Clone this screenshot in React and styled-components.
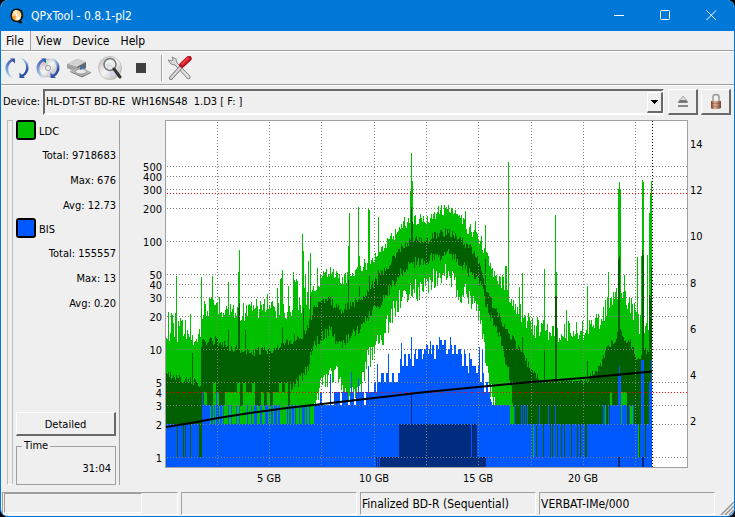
import React from 'react';
import styled, { createGlobalStyle } from 'styled-components';

const Global = createGlobalStyle`
  * { box-sizing: border-box; }
  body { margin: 0; background: #000; }
  button, select { font: inherit; color: inherit; }
`;

const small = '"DejaVu Sans Condensed", "DejaVu Sans", sans-serif';

const Window = styled.div`
  min-height: 100vh;
  display: flex;
  flex-direction: column;
  background: #efefef;
  border: 1px solid #0078d7;
  border-top: 0;
  border-radius: 8px;
  overflow: hidden;
  color: #000;
  font: 11px/14px ${small};
`;

const TitleBar = styled.header`
  display: flex;
  align-items: center;
  height: 31px;
  flex: none;
  padding-left: 8px;
  background: #0078d7;
  color: #fff;
`;

const Title = styled.h1`
  flex: 1;
  margin: 0 0 0 6px;
  font: 400 12px/16px ${small};
`;

const CaptionButton = styled.button`
  display: grid;
  place-items: center;
  width: 46px;
  height: 31px;
  padding: 0;
  border: 0;
  background: none;
`;

const MenuBar = styled.nav`
  display: flex;
  height: 20px;
  flex: none;
  border-bottom: 1px solid #a0a0a0;
`;

const MenuItem = styled.button`
  height: 19px;
  padding: 0 5px;
  border: 0;
  border-right: 1px solid ${p => (p.$active ? '#a0a0a0' : 'transparent')};
  background: ${p => (p.$active ? '#f4f4f4' : 'none')};
  font: 12px/18px ${small};

  &:first-child { padding-right: 6px; }
`;

const ToolBar = styled.div`
  display: flex;
  align-items: center;
  gap: 3px;
  height: 34px;
  flex: none;
  padding-left: 2px;
  border-top: 1px solid #fff;
  border-bottom: 1px solid #a0a0a0;
`;

const ToolButton = styled.button`
  display: grid;
  place-items: center;
  width: 28px;
  height: 28px;
  padding: 0;
  border: 0;
  background: none;
`;

const ToolDivider = styled.span`
  width: 2px;
  height: 26px;
  margin: 0 0 0 3px;
  border-left: 1px solid #a0a0a0;
  border-right: 1px solid #fff;
`;

const DeviceRow = styled.div`
  display: flex;
  align-items: center;
  height: 35px;
  flex: none;
  padding: 0 3px 2px 2px;
  border-top: 1px solid #fff;
`;

const DeviceLabel = styled.label`
  width: 40px;
  flex: none;
  white-space: nowrap;
`;

const SelectBox = styled.div`
  position: relative;
  flex: 1;
  margin-right: 4px;
`;

const DeviceSelect = styled.select`
  display: block;
  width: 100%;
  height: 26px;
  padding: 0 20px 0 1px;
  appearance: none;
  border: 2px solid;
  border-color: #696969 #fff #fff #696969;
  border-radius: 0;
  background: #efefef;
  font: 11px/14px ${small};
`;

const SelectArrow = styled.span`
  position: absolute;
  top: 3px;
  right: 1px;
  display: grid;
  place-items: center;
  width: 16px;
  height: 21px;
  border: solid;
  border-width: 1px 2px 2px 1px;
  border-color: #fff #696969 #696969 #fff;
  pointer-events: none;
`;

const PushButton = styled.button`
  display: grid;
  place-items: center;
  width: ${p => (p.$wide ? '100%' : '30px')};
  height: ${p => (p.$wide ? '24px' : '26px')};
  margin-left: ${p => (p.$second ? '3px' : '0')};
  padding: ${p => (p.$wide ? '2px 0 0' : '0')};
  flex: none;
  border: solid;
  border-width: 1px 2px 2px 1px;
  border-color: #fff #696969 #696969 #fff;
  background: #efefef;
`;

const Main = styled.main`
  display: flex;
  flex: 1;
  padding-bottom: 4px;
`;

const Handle = styled.div`
  width: 6px;
  margin: 0 3px 3px 6px;
  flex: none;
  border: 1px solid #bdbdbd;
  border-bottom-color: #fff;
`;

const SidePanel = styled.aside`
  display: flex;
  flex-direction: column;
  width: 104px;
  flex: none;
  margin-bottom: 3px;
  padding-right: 3px;
  border-right: 1px solid #a0a0a0;
`;

const Swatch = styled.button`
  width: 20px;
  height: 20px;
  flex: none;
  padding: 0;
  border: 2px solid #000;
  border-radius: 3px;
  background: ${p => p.$color};
`;

const MetricHead = styled.h2`
  display: flex;
  align-items: flex-end;
  gap: 3px;
  margin: 0;
  font: inherit;
  line-height: 16px;
`;

const Metric = styled.section`
  margin-bottom: 3px;
`;

const Stat = styled.p`
  margin: 0;
  padding-top: 9px;
  height: 25px;
  line-height: 14px;
  text-align: right;
`;

const SideFooter = styled.div`
  margin-top: auto;
`;

const TimeBox = styled.fieldset`
  height: 46px;
  margin: 3px 0 0;
  padding: 9px 4px 0;
  border: 1px solid #a0a0a0;
  text-align: right;

  legend {
    margin-left: 1px;
    padding: 0 2px;
    text-align: left;
  }
`;

const ChartArea = styled.div`
  flex: 1;
  min-width: 0;
  margin-left: 2px;

  svg { display: block; width: 100%; height: auto; }
`;

const StatusBar = styled.footer`
  display: flex;
  gap: 3px;
  height: 24px;
  flex: none;
  padding: 0 0 1px 1px;
  font: 12px/22px ${small};
`;

const StatusCell = styled.div`
  flex: 1;
  min-width: 0;
  padding-left: 1px;
  border: 1px solid;
  border-color: #a0a0a0 #fff #fff #a0a0a0;
  white-space: nowrap;
`;

const ProgressWell = styled.div`
  width: 80%;
  height: 20px;
  border: 1px solid;
  border-color: #a0a0a0 #fff #fff #a0a0a0;
`;

const Grip = styled.svg`
  align-self: flex-end;
  flex: none;
  margin-left: 2px;
`;

/* ---- scan data ---- */

const X0 = 166;
const X1 = 652;
const levelY = v => Math.round(457 - 108 * Math.log10(v));

const at = (knots, x) => {
  let i = 1;
  while (i < knots.length - 1 && knots[i][0] < x) i += 1;
  const [xa, ya] = knots[i - 1];
  const [xb, yb] = knots[i];
  return ya + ((yb - ya) * (x - xa)) / (xb - xa);
};

const noise = (x, seed) => {
  const s = Math.sin(x * 12.9898 + seed * 78.233) * 43758.5453;
  return s - Math.floor(s);
};

const ldcMax = [[166, 326], [200, 334], [201, 312], [215, 305], [235, 313], [252, 312], [262, 307], [280, 315], [300, 305], [310, 300], [315, 286], [329, 270], [340, 281], [352, 274], [362, 268], [370, 260], [385, 246], [400, 227], [410, 219], [424, 221], [436, 213], [446, 209], [456, 216], [468, 229], [480, 240], [486, 256], [492, 272], [497, 282], [504, 282], [513, 304], [520, 312], [530, 327], [545, 331], [555, 334], [570, 331], [583, 332], [596, 325], [605, 310], [612, 299], [622, 299], [632, 308], [638, 325], [652, 330]];
const avgMax = [[166, 374], [200, 384], [201, 343], [215, 340], [232, 348], [250, 353], [268, 350], [290, 341], [303, 334], [310, 320], [315, 304], [328, 299], [340, 311], [350, 305], [360, 299], [370, 287], [380, 276], [390, 264], [400, 248], [412, 240], [427, 241], [438, 233], [448, 232], [460, 240], [474, 252], [480, 266], [484, 283], [492, 304], [502, 322], [515, 343], [525, 360], [534, 375], [540, 381], [585, 381], [600, 366], [608, 345], [620, 333], [630, 343], [637, 358], [652, 348]];
const avgMin = [[166, 424], [201, 424], [202, 392], [285, 391], [300, 380], [308, 366], [313, 343], [330, 331], [340, 345], [352, 334], [362, 326], [372, 311], [382, 300], [391, 286], [400, 274], [410, 263], [428, 260], [446, 253], [456, 259], [468, 272], [480, 283], [489, 316], [500, 340], [507, 366], [513, 404], [515, 424], [652, 424]];
const ldcMin = [[166, 424], [313, 424], [315, 405], [325, 378], [335, 373], [345, 399], [360, 393], [367, 362], [375, 347], [385, 331], [395, 307], [402, 296], [411, 286], [419, 292], [431, 280], [445, 275], [455, 286], [465, 295], [474, 304], [480, 320], [486, 362], [492, 401], [498, 424], [652, 424]];
const bisMax = [[166, 2], [201, 2], [202, 3], [314, 3], [350, 3.4], [366, 3.8], [376, 4.5], [388, 5.5], [395, 6], [407, 8], [417, 9], [429, 10], [445, 10.5], [460, 9.5], [468, 7], [479, 6.5], [486, 4.4], [492, 3], [509, 3], [510, 2], [652, 2]];

const peaks = { 176: 276, 201: 277, 212: 276, 228: 282, 238: 272, 239: 250, 267: 294, 277: 288, 280: 279, 281: 278, 282: 270, 288: 286, 293: 272, 294: 280, 295: 282, 296: 279, 297: 281, 302: 234, 303: 251, 304: 288, 305: 275, 308: 261, 310: 253, 317: 268, 348: 246, 349: 213, 358: 207, 359: 256, 368: 208, 369: 210, 378: 217, 379: 252, 410: 191, 411: 153, 412: 181, 438: 206, 448: 205, 465: 211, 475: 221, 484: 248, 485: 225, 505: 266, 506: 266, 508: 162, 519: 287, 522: 273, 544: 269, 555: 215, 556: 272, 566: 310, 587: 286, 608: 272, 618: 189, 619: 182, 620: 189, 624: 275, 637: 257, 641: 256, 642: 180, 643: 182, 647: 255, 649: 213, 650: 194, 651: 181 };
const darkPeaks = { 192: 353, 228: 330, 238: 308, 239: 303, 245: 330, 282: 327, 303: 308, 310: 296, 348: 280, 359: 286, 369: 276, 378: 270, 410: 240, 411: 207, 412: 222, 485: 259, 522: 337, 544: 350, 555: 296, 556: 296, 587: 361, 618: 259, 619: 256, 642: 250, 643: 255, 649: 295, 650: 296, 651: 267 };
const bisPeaks = { 202: 392, 216: 392, 330: 374, 351: 372, 358: 378, 368: 366, 377: 364, 388: 354, 401: 343, 411: 337, 430: 341, 439: 337, 450: 337, 469: 353, 479: 347, 482: 350, 618: 376, 619: 366, 620: 376, 641: 360, 642: 360, 643: 360, 649: 382, 650: 382, 651: 360 };
const clearColumns = [177, 183, 185, 190, 199, 200, 201, 533, 536, 543, 550, 552, 557, 561, 564, 571, 577, 580, 585, 586, 638, 639, 645];

const bar = (x, top, bottom) => (bottom > top ? `M${x} ${top}h1V${bottom}h-1z` : '');

const averageFloor = x => {
  const block = noise(Math.floor(x / 3), 4);
  if (x < 202) return 424;
  if (x < 290) return block > 0.62 ? 406 : block < 0.18 ? 383 : 392;
  if (x < 515) return Math.min(424, Math.round(at(avgMin, x) + (noise(x, 3) - 0.5) * 12));
  if (x > 603 && x < 633) {
    if (x > 609 && x < 627) return block > 0.5 ? 392 : 406;
    return block > 0.4 ? 424 : 406;
  }
  return 424;
};

const buildLayers = () => {
  const out = { light: '', dark: '', blue: '' };
  for (let x = X0; x < X1; x += 1) {
    const n = noise(x, 1);
    const m = noise(x, 2);
    const quiet = x > 310 && x < 500;
    const spread = x < 201 ? 34 : quiet ? 13 : 21;
    const top = peaks[x] || Math.round(at(ldcMax, x) + (n - 0.55) * spread);
    const dTop = darkPeaks[x] || Math.round(at(avgMax, x) + (m - 0.5) * (x > 538 && x < 583 ? 2 : 9));
    const dBottom = averageFloor(x);
    const lowNoise = x > 313 && x < 498 ? (noise(x, 5) - 0.5) * 24 : 0;
    const lBottom = Math.min(424, Math.round(at(ldcMin, x) + lowNoise));

    let level = at(bisMax, x);
    if (x > 201 && x < 314) level = x > 208 && noise(x, 6) > 0.43 ? 2 : 3;
    else if (x >= 314 && x < 490) level = Math.max(3, Math.round(level + (noise(Math.floor(x / 2), 7) - 0.5) * level * 0.42));
    else if (x > 509 && x < 528) level = noise(x, 8) > 0.65 ? 3 : 2;
    else if (x > 602 && x < 634) level = noise(x, 9) > 0.52 ? 3 : 2;
    else if ([539, 548, 555].includes(x)) level = 3;
    const clear = clearColumns.includes(x);
    const bTop = clear ? 457 : bisPeaks[x] || levelY(level);
    out.light += bar(x, top, clear ? 457 : lBottom);
    out.dark += bar(x, dTop, clear && x !== 533 && x !== 638 ? 457 : dBottom);
    out.blue += bar(x, bTop, 467);
  }
  return out;
};

const layers = buildLayers();

const leftTicks = [500, 400, 300, 200, 100, 50, 40, 30, 20, 10, 5, 4, 3, 2, 1];
const rightTicks = [14, 12, 10, 8, 6, 4, 2];
const columns = [217, 269, 321, 374, 426, 478, 531, 583, 635];

const AxisText = styled.text`
  font: 11px ${small};
  fill: #000;
`;

const Chart = () => (
  <svg viewBox="122 120 612 368" role="img" aria-label="LDC and BIS error chart">
    <rect x="165" y="120" width="523" height="348" fill="#a0a0a0" />
    <rect x="166" y="121" width="521" height="346" fill="#fff" />
    <g shapeRendering="crispEdges">
      <path d={layers.light} fill="#00c000" />
      <path d={layers.dark} fill="#006000" />
      <path d={layers.blue} fill="#0058ff" />
      <path d="M399 424H471V457H472V424H477V457H486V467H380V457H399zM376 457h1v10h-1zM378 457h1v10h-1zM411 392h1v32h-1zM618 457h2v10h-2zM642 457h2v10h-2z" fill="#002c80" />
      <g stroke="#808080" strokeDasharray="1 2" fill="none">
        {leftTicks.filter(v => v !== 4).map(v => <path key={v} d={`M167 ${levelY(v) + 0.5}H687`} />)}
        {columns.map(x => <path key={x} d={`M${x + 0.5} 122V467`} />)}
      </g>
      <path d="M167 193.5H687M167 392.5H687" stroke="#f00" strokeDasharray="1 2" />
      <path d="M652.5 121V467" stroke="#000" strokeDasharray="1 2" />
    </g>
    <path d="M166 427L191 423L218 418L250 413L287 408L322 404L374 398L426 392L478 387L531 382L583 378L652 371.5" fill="none" stroke="#000" strokeWidth="2" />
    {leftTicks.map(v => <AxisText key={v} x="162" y={levelY(v) + 5} textAnchor="end">{v}</AxisText>)}
    {rightTicks.map((v, i) => <AxisText key={v} x="690" y={148 + Math.round(i * 46.2)}>{v}</AxisText>)}
    {[5, 10, 15, 20].map((v, i) => <AxisText key={v} x={269 + Math.round(i * 104.6)} y="482" textAnchor="middle">{v} GB</AxisText>)}
  </svg>
);

/* ---- icons ---- */

const Logo = () => (
  <svg width="16" height="16" viewBox="0 0 16 16">
    <path d="M8 .5C3.500.5 1.500 3.500 1.500 7.500S4 14 7.500 14l2 .5c1.500 1.300 3 1 4 .2l-1.500-2c1.500-1.500 2.200-3 2.200-5.200C14.200 3 12 .5 8 .5z" fill="#111" />
    <ellipse cx="7.700" cy="7.300" rx="4.700" ry="5.200" fill="#ffd58a" />
    <path d="M7.700 7.300L4 4Q5.500 2 8 2.100zM7.700 7.300L12 10Q10 12.600 7.500 12.500z" fill="#fff5da" />
    <path d="M7.700 7.300L3 8Q3 11 5.500 12z" fill="#ff9a28" />
    <circle cx="7.800" cy="7.300" r="1.300" fill="#fff" stroke="#ccc" strokeWidth=".5" />
  </svg>
);

const Arcs = () => (
  <g>
    <path d="M8.500 2.500C3 4 .5 8 .5 12.500C.7 17.500 4 21.500 9 22.500C5 20 3 16.500 3.200 12.500C3.500 8.500 5.500 6 8.500 5z" fill="url(#arcL)" />
    <path d="M5 2.500H10V7.500z" fill="#3658ae" />
    <path d="M15 1.500C20.500 3 23.500 7 23.500 11.500C23.500 16 21 19.500 16.500 21.500V19C19.500 17.500 21 15 21 11.500C21 7 18.500 3.800 15 1.500z" fill="url(#arcR)" />
    <path d="M14.500 16.500V22H20z" fill="#3152a4" />
  </g>
);

const Disc = ({ r }) => (
  <g>
    <circle cx="12" cy="12" r={r} fill="url(#disc)" stroke="#aaa" strokeWidth=".6" />
    <path d="M12 12L7 5L12 4z" fill="#b7e7c5" />
    <path d="M12 12L5 8L7 5z" fill="#efb8d3" />
    <path d="M12 12L17 19L12 20z" fill="#d8d2f0" />
    <circle cx="12" cy="12" r="2.500" fill="#eee" stroke="#999" />
  </g>
);

const Defs = () => (
  <defs>
    <linearGradient id="arcL" x2="0" y2="1"><stop stopColor="#3359b5" /><stop offset="1" stopColor="#b4dcf6" /></linearGradient>
    <linearGradient id="arcR" x2="0" y2="1"><stop stopColor="#b4dcf6" /><stop offset=".6" stopColor="#2c4ca4" /></linearGradient>
    <linearGradient id="disc" x2="1" y2="1"><stop stopColor="#bbb" /><stop offset=".5" stopColor="#f5f5f5" /><stop offset="1" stopColor="#aaa" /></linearGradient>
    <linearGradient id="brass"><stop stopColor="#754025" /><stop offset=".4" stopColor="#e4b699" /><stop offset="1" stopColor="#75452e" /></linearGradient>
  </defs>
);

const icons = {
  Refresh: <Arcs />,
  'Refresh media': <><Disc r={9} /><Arcs /></>,
  Drive: <>
    <path d="M0 8L10 3L19 6V12L10 16L0 12z" fill="#8b8b8b" />
    <path d="M0 8L10 3L19 6L10 11z" fill="#d2d2d2" />
    <path d="M0 8L10 11V16L0 12z" fill="#a2a2a2" />
    <path d="M10 11L19 6V12L10 16z" fill="#5f666e" />
    <path d="M3 15L13 11L24 16L15 20z" fill="#b5b5b5" />
    <path d="M3 15L15 20L24 16V17L15 21.500L3 16z" fill="#808080" />
    <ellipse cx="14" cy="15.500" rx="5.500" ry="2.600" fill="#e9e9e9" stroke="#888" strokeWidth=".8" />
    <path d="M13 11L17 9V12L13 14z" fill="#456fa5" />
  </>,
  Scan: <>
    <Disc r={11.5} />
    <circle cx="12" cy="8.500" r="6" fill="#e5ecef" fillOpacity=".6" stroke="#777" strokeWidth="1.500" />
    <path d="M16 13L22 21" stroke="#333" strokeWidth="3" strokeLinecap="round" />
    <path d="M8 8Q10 4 14 6" stroke="#fff" strokeWidth="1.500" fill="none" />
  </>,
  Stop: <path d="M7 7H17V17H7z" fill="#404040" />,
  Preferences: <>
    <path d="M4 1L8 3L9 7L22 20Q23 23 20 23L7 9L3 8L0 4L4 5L5 4z" fill="#dadada" stroke="#888" />
    <path d="M13 11L3 22" stroke="#777" strokeWidth="4" strokeLinecap="round" />
    <path d="M13 11L3 22" stroke="#ddd" strokeWidth="2" strokeLinecap="round" />
    <path d="M14 9L21 2.500" stroke="#b4141f" strokeWidth="5.500" strokeLinecap="round" />
    <path d="M14 8L20 2.500" stroke="#ee3940" strokeWidth="2.500" strokeLinecap="round" />
  </>,
};

const Tool = ({ name }) => (
  <ToolButton aria-label={name}>
    <svg width="24" height="24" viewBox="0 0 24 24">{icons[name]}</svg>
  </ToolButton>
);

const MetricBlock = ({ name, color, total, max, avg }) => (
  <Metric>
    <MetricHead><Swatch $color={color} aria-label={`${name} color`} />{name}</MetricHead>
    <Stat>Total: {total}</Stat>
    <Stat>Max: {max}</Stat>
    <Stat>Avg: {avg}</Stat>
  </Metric>
);

export default function App() {
  return (
    <>
      <Global />
      <Window>
        <TitleBar>
          <Logo />
          <Title>QPxTool - 0.8.1-pl2</Title>
          <CaptionButton aria-label="Minimize">
            <svg width="11" height="11" viewBox="0 0 11 11"><path d="M0 5.500H10" stroke="#fff" /></svg>
          </CaptionButton>
          <CaptionButton aria-label="Maximize">
            <svg width="11" height="11" viewBox="0 0 11 11"><rect x=".5" y=".5" width="9" height="9" rx="1" fill="none" stroke="#fff" /></svg>
          </CaptionButton>
          <CaptionButton aria-label="Close">
            <svg width="11" height="11" viewBox="0 0 11 11"><path d="M.5 .5L10 10M10 .5L.5 10" stroke="#fff" /></svg>
          </CaptionButton>
        </TitleBar>
        <MenuBar>
          <MenuItem $active>File</MenuItem>
          <MenuItem>View</MenuItem>
          <MenuItem>Device</MenuItem>
          <MenuItem>Help</MenuItem>
        </MenuBar>
        <ToolBar>
          <Tool name="Refresh" />
          <Tool name="Refresh media" />
          <Tool name="Drive" />
          <Tool name="Scan" />
          <Tool name="Stop" />
          <ToolDivider />
          <Tool name="Preferences" />
          <svg width="0" height="0" aria-hidden="true"><Defs /></svg>
        </ToolBar>
        <DeviceRow>
          <DeviceLabel htmlFor="device">Device:</DeviceLabel>
          <SelectBox>
            <DeviceSelect id="device">
              <option>{'HL-DT-ST BD-RE\u00a0 WH16NS48\u00a0 1.D3 [ F: ]'}</option>
            </DeviceSelect>
            <SelectArrow>
              <svg width="7" height="4" viewBox="0 0 7 4" shapeRendering="crispEdges"><path d="M0 0H7L3.500 4z" /></svg>
            </SelectArrow>
          </SelectBox>
          <PushButton aria-label="Eject">
            <svg width="12" height="13" viewBox="0 0 12 13">
              <path d="M6 1L11 7H1z" fill="#ddd" stroke="#aaa" />
              <path d="M3 5H9L11 8H1z" fill="#777" />
              <path d="M1 10H11V12H1z" fill="#888" />
            </svg>
          </PushButton>
          <PushButton $second aria-label="Lock">
            <svg width="12" height="17" viewBox="0 0 12 17">
              <path d="M3 9V4Q3 1.500 6 1.500T9 4V9" fill="none" stroke="#999" strokeWidth="1.500" />
              <path d="M1 8H11V15L9 16H2L1 15z" fill="url(#brass)" />
              <path d="M1 10.500H11M1 13.500H11" stroke="#5c3221" strokeOpacity=".3" />
            </svg>
          </PushButton>
        </DeviceRow>
        <Main>
          <Handle />
          <SidePanel>
            <MetricBlock name="LDC" color="#00c000" total="9718683" max="676" avg="12.73" />
            <MetricBlock name="BIS" color="#0058ff" total="155557" max="13" avg="0.20" />
            <SideFooter>
              <PushButton $wide>Detailed</PushButton>
              <TimeBox><legend>Time</legend>31:04</TimeBox>
            </SideFooter>
          </SidePanel>
          <ChartArea><Chart /></ChartArea>
        </Main>
        <StatusBar>
          <StatusCell><ProgressWell /></StatusCell>
          <StatusCell />
          <StatusCell>Finalized BD-R (Sequential)</StatusCell>
          <StatusCell>VERBAT-IMe/000</StatusCell>
          <Grip width="14" height="14" viewBox="0 0 14 14">
            <path d="M1 14L14 1M5 14L14 5M9 14L14 9" stroke="#999" strokeWidth="1.500" />
          </Grip>
        </StatusBar>
      </Window>
    </>
  );
}
